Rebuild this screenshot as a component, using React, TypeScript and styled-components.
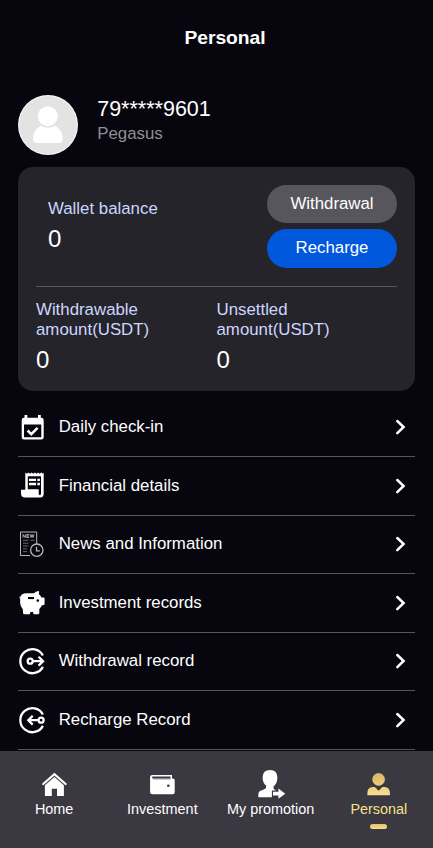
import React from "react";
import styled, { createGlobalStyle } from "styled-components";

const GlobalStyle = createGlobalStyle`
  * { box-sizing: border-box; }
  html, body { margin: 0; padding: 0; background: #07060e; }
  body { font-family: Arial, "Liberation Sans", sans-serif; color: #fff; overflow: hidden; }
  svg { display: block; }
`;

const Page = styled.div`
  height: 848px;
  width: 100%;
  display: flex;
  flex-direction: column;
  overflow: hidden;
  background: #07060e;
`;

const Content = styled.main`
  height: 751px;
  flex: none;
  overflow: hidden;
  padding: 0 18px;
`;

const Title = styled.h1`
  margin: 0;
  height: 95px;
  padding: 27px 0 0 17px;
  font-size: 19.24px;
  line-height: 22px;
  font-weight: 700;
  text-align: center;
`;

const Profile = styled.section`
  display: flex;
  height: 72px;
  gap: 19.2px;
`;

const UserName = styled.div`
  padding-top: 1px;
  font-size: 21.5px;
  line-height: 26px;
`;

const UserLevel = styled.div`
  margin-top: 2px;
  font-size: 16.84px;
  line-height: 20px;
  color: #8f8f93;
`;

const Card = styled.section`
  height: 224px;
  padding: 18px;
  border-radius: 15px;
  background: #25242a;
`;

const CardTop = styled.div`
  display: flex;
  justify-content: space-between;
  height: 102px;
  padding-left: 12px;
  border-bottom: 1px solid #57565c;
`;

const Balance = styled.div<{ $top: number }>`
  flex: 1;
  padding-top: ${(p) => p.$top}px;
`;

const BalanceLabel = styled.div`
  max-width: 130px;
  font-size: 16.84px;
  line-height: 20px;
  color: #cdd6ff;
`;

const BalanceValue = styled.div`
  margin-top: 6px;
  font-size: 24.06px;
  line-height: 28px;
`;

const Actions = styled.div`
  display: flex;
  flex-direction: column;
  gap: 6px;
`;

const ActionButton = styled.button<{ $primary?: boolean }>`
  width: 130px;
  height: ${(p) => (p.$primary ? 39 : 38)}px;
  border: 0;
  border-radius: 20px;
  padding: 0 0 1px;
  background: ${(p) => (p.$primary ? "#0058dc" : "#57565c")};
  color: #fff;
  font: 16.84px Arial, "Liberation Sans", sans-serif;
`;

const CardBottom = styled.div`
  display: flex;
`;

const Menu = styled.nav`
  padding-top: 7.6px;
`;

const MenuRow = styled.a`
  display: flex;
  align-items: center;
  height: 58.53px;
  border-bottom: 1px solid #57565c;
  font-size: 16.84px;
  line-height: 20px;
`;

const MenuIcon = styled.span`
  width: 28px;
  margin-right: 12.7px;
`;

const MenuLabel = styled.span`
  flex: 1;
  padding-top: 0.1px;
`;

const Chevron = styled.span`
  margin-right: 8px;
`;

const TabBar = styled.nav`
  display: flex;
  flex: none;
  height: 97px;
  background: #3a3840;
`;

const Tab = styled.a<{ $active?: boolean }>`
  flex: 1;
  display: flex;
  flex-direction: column;
  align-items: center;
  padding-top: 18px;
  font-size: 14.43px;
  line-height: 18px;
  white-space: nowrap;
  color: ${(p) => (p.$active ? "#f7e08d" : "#fff")};
`;

const TabIcon = styled.span`
  height: 31px;
`;

const Indicator = styled.span`
  width: 17px;
  height: 5px;
  margin-top: 6px;
  border-radius: 3px;
  background: linear-gradient(#e3c06c, #f6dd8d);
`;

const Avatar = () => (
  <svg width="60" height="60" viewBox="0 0 60 60">
    <circle cx="30" cy="30" r="30" fill="#fafafa" />
    <circle cx="30" cy="30" r="29" fill="#e3e3e3" />
    <circle cx="29.8" cy="21.3" r="10" fill="#fff" />
    <path d="M22.5 30.8q7.5 4 15 0q7.2 4.6 7.2 13.2q0 4-4 4H19q-4 0-4-4q0-8.600 7.500-13.200Z" fill="#fff" />
  </svg>
);

const Icon = ({ children }: { children: React.ReactNode }) => (
  <svg width="28" height="28" viewBox="0 0 28 28" fill="#fff">
    {children}
  </svg>
);

const CalendarIcon = () => (
  <Icon>
    <path
      fillRule="evenodd"
      d="M6.500 2h2.800v2.800H20V2h2.800v2.800h.5q2.400 0 2.400 2.400v17q0 2.400-2.400 2.400H6q-2.300 0-2.300-2.400v-17q0-2.400 2.300-2.400h.5ZM6 11.500v12.700h17.300V11.500Z"
    />
    <path d="M9.600 17.500l3.700 3.700l6.300-6.300" fill="none" stroke="#fff" strokeWidth="2.500" />
  </Icon>
);

const ReceiptIcon = () => (
  <Icon>
    <path d="M7.300 .4l1.600 1.300l1.600-1.300l1.600 1.300l1.600-1.300l1.600 1.300l1.600-1.300l1.600 1.300l1.600-1.300l1.600 1.300l1.600-1.300l1.600 1.300l.8-1.300v21q0 4-3.600 4H7.200q-4.200 0-4.200-4v-3.600h4.300Z" />
    <path d="M9.800 4.300H23v17q0 1.900-1.200 1.900t-1.400-2.600v-3.200H9.800Z" fill="#07060e" />
    <path d="M11 6.700h7v2.400h-7zM19.300 6.700h2.600v2.400h-2.600zM11 10.800h7v2.400h-7zM19.300 10.800h2.600v2.400h-2.600zM9 17.500h11.500v4H9z" />
  </Icon>
);

const NewsIcon = () => (
  <Icon>
    <g fill="none" stroke="#b7b7ba" strokeWidth="1">
      <path d="M12 25.500H2.500v-23.500h16.200V14" />
      <path d="M5 13.200h5.500M5 16h5.500M5 18.800h4M5 21.600h4M12.500 10.300h4M5 10.300h5.500" stroke="#68686c" />
      <path d="M5 7.700V4.400l2.300 3.200V4.400M11 4.500H8.800v3H11M8.800 6H11M12 4.400l1 3.100l1-3.100l1 3.100l1-3.100" strokeWidth=".9" />
      <circle cx="18.800" cy="20.200" r="6.200" strokeWidth="1.300" />
      <path d="M18.500 16.700v4.100h3.400" strokeWidth="1.300" />
    </g>
  </Icon>
);

const PigIcon = () => (
  <Icon>
    <path d="M2.300 8.500Q3.200 4.300 8.500 4.300H16Q17.800 2.300 20.300 2Q21.300 2 21.100 3.200L20.900 5.200Q22.700 6.500 23.500 8.500H25.500Q26.600 8.500 26.600 9.600V14.800Q26.600 15.900 25.500 16.100L23.700 16.500Q22.700 18.700 21.300 19.900V24Q21.300 25.200 20.100 25.200H16.400Q15.200 25.200 15.200 24V22.900H12.200V24Q12.200 25.200 11 25.200H6.400Q5.200 25.200 5.100 24L4.800 20.300Q2.300 17.500 2.100 13.700Z" />
    <path d="M2.500 10.500Q2 9.200 2.200 7.500" fill="none" stroke="#fff" strokeWidth="1" />
    <path d="M10 8h6v2.100h-6z" fill="#07060e" />
    <circle cx="19.800" cy="11.600" r="1.300" fill="#07060e" />
  </Icon>
);

const TransferIcon = ({ incoming }: { incoming?: boolean }) => (
  <Icon>
    <g fill="none" stroke="#fff" strokeWidth="2.300">
      <path d="M24.900 8.500A12 12 0 1 0 24.900 19.900" />
      {incoming ? (
        <>
          <circle cx="23.100" cy="14.200" r="2.500" />
          <path d="M20.600 14.200H10.500M14.700 9.800l-4.400 4.400l4.400 4.400" />
        </>
      ) : (
        <>
          <circle cx="12.200" cy="14.200" r="2.500" />
          <path d="M14.700 14.200H25M20.600 9.800l4.400 4.400l-4.400 4.400" />
        </>
      )}
    </g>
  </Icon>
);

const ChevronIcon = () => (
  <svg width="12" height="18" viewBox="0 0 12 18" fill="none">
    <path d="M2.300 3l6.300 6l-6.300 6.200" stroke="#fff" strokeWidth="2.500" strokeLinecap="round" />
  </svg>
);

const HomeIcon = () => (
  <svg width="30" height="30" viewBox="0 0 30 30" fill="#fff">
    <path d="M4.200 15L15.400 5.200L26.600 15" fill="none" stroke="#fff" strokeWidth="2.200" strokeLinecap="round" />
    <path d="M5.900 16.300L15.400 8L24.900 16.300V27h-6.900v-7.300h-5.200V27H5.900Z" />
  </svg>
);

const WalletIcon = () => (
  <svg width="30" height="30" viewBox="0 0 30 30" fill="#fff">
    <path
      fillRule="evenodd"
      d="M5.300 6H25v3.400h1q1.700 0 1.700 1.800v12q0 2-2 2H5.300q-2.200 0-2.200-2.200V8.200Q3.100 6 5.300 6ZM5.800 7.500q-.7 0-.7.900t.7 1H23.500V7.500Z"
    />
    <path d="M6 9.500h17.500v.9H6z" fill="#77757b" />
    <circle cx="21.300" cy="16.800" r="1.300" fill="#3a3840" />
  </svg>
);

const PromotionIcon = () => (
  <svg width="30" height="30" viewBox="0 0 30 30" fill="#fff">
    <path d="M14 1.100q7.200 0 7.400 7.400q0 5.700-3.800 8.800v2.300q.2 1 2.700 1.900h-4.400v6.800H2.400q-.6-5.400 2-6.500q5-1.500 5.700-3v-2.300Q6.700 14.300 6.600 8.500Q6.800 1.100 14 1.100Z" />
    <path d="M17 22.800h5.400v-3.200l6.900 5.100l-6.900 5v-3.100H17Z" />
  </svg>
);

const PersonalIcon = () => (
  <svg width="30" height="30" viewBox="0 0 30 30">
    <defs>
      <linearGradient id="gold" x1="0" y1="4" x2="0" y2="27" gradientUnits="userSpaceOnUse">
        <stop stopColor="#dbb665" />
        <stop offset="1" stopColor="#f8e091" />
      </linearGradient>
    </defs>
    <g fill="url(#gold)">
      <circle cx="14.600" cy="10.400" r="6.300" />
      <path d="M8.500 18.100h2.300l3.800 3.700l3.800-3.700h2.300q5.300.3 5.200 6v2.200H3.400v-2.200q0-5.700 5.100-6Z" />
    </g>
  </svg>
);

const menuItems = [
  { label: "Daily check-in", icon: <CalendarIcon /> },
  { label: "Financial details", icon: <ReceiptIcon /> },
  { label: "News and Information", icon: <NewsIcon /> },
  { label: "Investment records", icon: <PigIcon /> },
  { label: "Withdrawal record", icon: <TransferIcon /> },
  { label: "Recharge Record", icon: <TransferIcon incoming /> },
];

const tabs = [
  { label: "Home", icon: <HomeIcon /> },
  { label: "Investment", icon: <WalletIcon /> },
  { label: "My promotion", icon: <PromotionIcon /> },
  { label: "Personal", icon: <PersonalIcon />, active: true },
];

export default function App() {
  return (
    <Page>
      <GlobalStyle />
      <Content>
        <Title>Personal</Title>
        <Profile>
          <Avatar />
          <div>
            <UserName>79*****9601</UserName>
            <UserLevel>Pegasus</UserLevel>
          </div>
        </Profile>
        <Card>
          <CardTop>
            <Balance $top={14}>
              <BalanceLabel>Wallet balance</BalanceLabel>
              <BalanceValue>0</BalanceValue>
            </Balance>
            <Actions>
              <ActionButton>Withdrawal</ActionButton>
              <ActionButton $primary>Recharge</ActionButton>
            </Actions>
          </CardTop>
          <CardBottom>
            <Balance $top={13}>
              <BalanceLabel>Withdrawable amount(USDT)</BalanceLabel>
              <BalanceValue>0</BalanceValue>
            </Balance>
            <Balance $top={13}>
              <BalanceLabel>Unsettled amount(USDT)</BalanceLabel>
              <BalanceValue>0</BalanceValue>
            </Balance>
          </CardBottom>
        </Card>
        <Menu>
          {menuItems.map((item) => (
            <MenuRow key={item.label}>
              <MenuIcon>{item.icon}</MenuIcon>
              <MenuLabel>{item.label}</MenuLabel>
              <Chevron>
                <ChevronIcon />
              </Chevron>
            </MenuRow>
          ))}
        </Menu>
      </Content>
      <TabBar>
        {tabs.map((tab) => (
          <Tab key={tab.label} $active={tab.active}>
            <TabIcon>{tab.icon}</TabIcon>
            {tab.label}
            {tab.active && <Indicator />}
          </Tab>
        ))}
      </TabBar>
    </Page>
  );
}
